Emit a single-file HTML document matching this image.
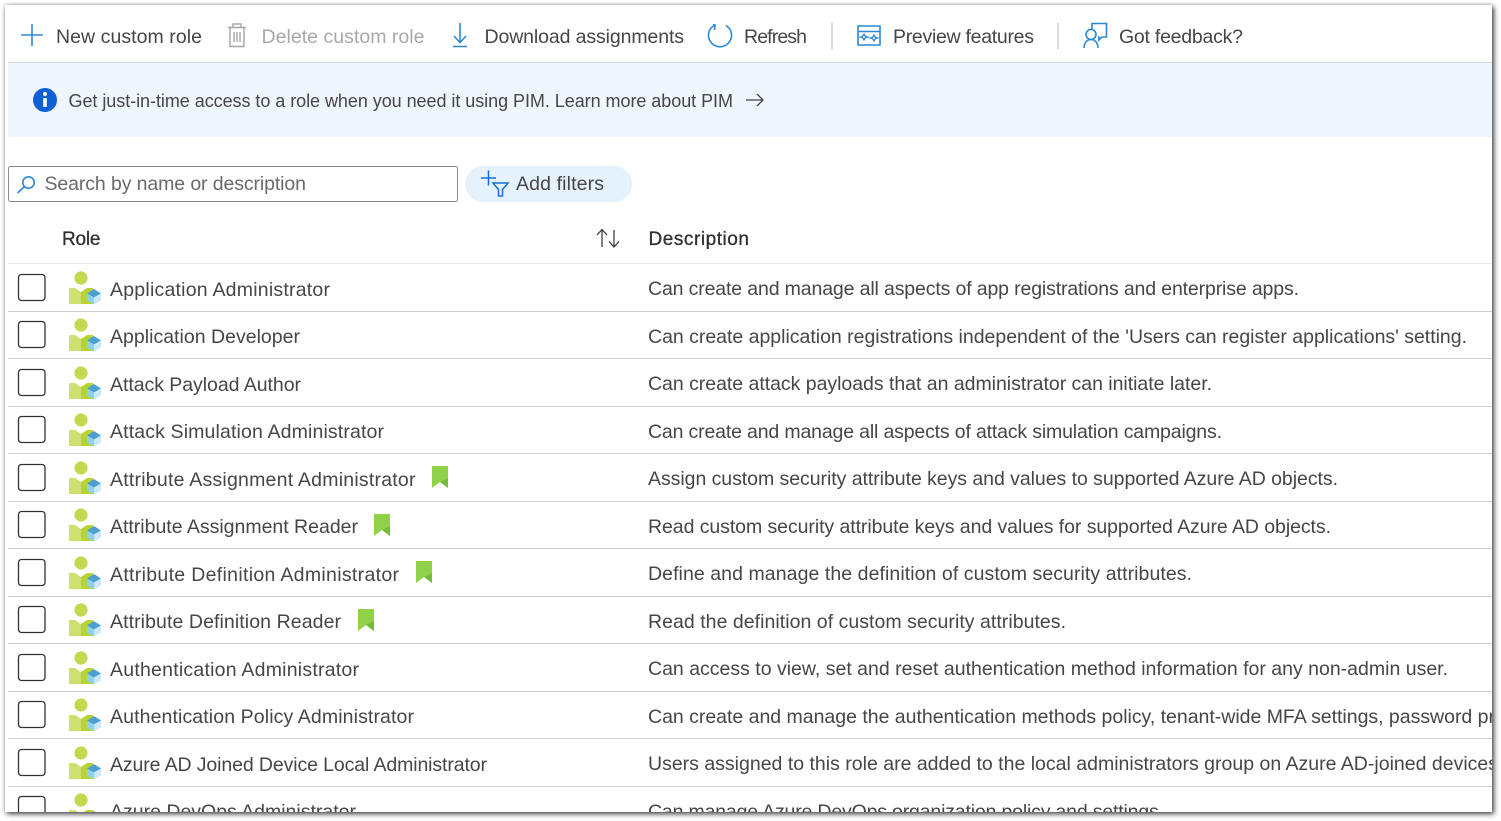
<!DOCTYPE html>
<html lang="en"><head><meta charset="utf-8"><title>Roles</title>
<style>
html,body{margin:0;padding:0;width:1501px;height:821px;background:#fff;overflow:hidden}
#p{position:absolute;left:5px;top:5px;width:1487px;height:807px;background:#fff;box-shadow:2px 2px 5px rgba(0,0,0,.7),0 0 4px rgba(0,0,0,.25)}
svg{position:absolute;left:0;top:0}
text{font-family:"Liberation Sans",sans-serif;font-size:19.5px;fill:#464646}
.d{fill:#a8a8a8}
.g{fill:#6a6a6a}
.h{fill:#2f2f2f;stroke:#2f2f2f;stroke-width:.3px}
.ic{fill:none;stroke:#2b88d8;stroke-width:1.6}
.l{stroke:#cfcfcf;stroke-width:1}
</style></head><body>
<div id="p"></div>
<svg width="1501" height="821" viewBox="0 0 1501 821" xmlns="http://www.w3.org/2000/svg">
<defs>
<clipPath id="c"><rect x="5" y="5" width="1487" height="807"/></clipPath>
<g id="u">
<circle cx="81" cy="278" r="6.6" fill="#c3d94f"/>
<path d="M69 288h6l6 4v12H69z" fill="#cfe070"/>
<path d="M81 292l6-4h6v16H81z" fill="#b9d334"/>
<path d="M87 293.500l7-4.500 7 4.500-7 4z" fill="#4a9fd0"/>
<path d="M87 293.500l7 4v7l-7-4z" fill="#8fd0ec"/>
<path d="M101 293.500l-7 4v7l7-4z" fill="#cbe8f5"/>
</g>
<g id="b">
<path d="M0 0h16v22l-8-6-8 6z" fill="#8fd24a"/>
<path d="M16 12v10l-8-6z" fill="#76ba3e"/>
</g>
</defs>
<g clip-path="url(#c)">
<!-- toolbar -->
<path d="M21 35h22M32 24v22" class="ic"/>
<text x="56" y="43" textLength="146">New custom role</text>
<path d="M228 27.500h18M233 27v-3h8v3M230 28v18.500h14V28M234 32v10M237 32v10M240 32v10" fill="none" stroke="#a6a6a6" stroke-width="1.400"/>
<text x="261.500" y="43" textLength="163" class="d">Delete custom role</text>
<path d="M460 23v19M454 36l6 6.500 6-6.500M453 46.500h14" class="ic"/>
<text x="484.500" y="43" textLength="199.500">Download assignments</text>
<path d="M714 25.500a11.500 11.500 0 1 0 12 0M713 24.500l2 .5-.5 5" class="ic"/>
<text x="744" y="43" textLength="63">Refresh</text>
<path d="M832 23v26M1058 23v26" stroke="#cfcfcf" stroke-width="1.500"/>
<path d="M858 26h22v19h-22zM858 31.500h22" class="ic"/>
<path d="M864 33.500c.6 2.400 1 2.800 3.500 3.500-2.500.7-2.900 1.100-3.500 3.500-.6-2.400-1-2.800-3.500-3.500 2.500-.7 2.900-1.100 3.500-3.500zM874 34.500c.6 2.400 1 2.800 3.500 3.500-2.500.7-2.900 1.100-3.500 3.500-.6-2.400-1-2.800-3.500-3.500 2.500-.7 2.900-1.100 3.500-3.500z" fill="none" stroke="#2b88d8" stroke-width="1.300"/>
<text x="893" y="43" textLength="141">Preview features</text>
<path d="M1092 29v-5.500h14.500V37h-4.500l-3 3v-3h-1" class="ic"/>
<circle cx="1091" cy="34.500" r="5" class="ic"/>
<path d="M1084 48c0-5 3-8.500 7-8.500s7 3.500 7 8.500" class="ic"/>
<text x="1119" y="43" textLength="124">Got feedback?</text>
<path d="M8 62.500h1484" stroke="#d2d6dc" stroke-width="1"/>
<!-- banner -->
<rect x="8" y="63" width="1484" height="74" fill="#eff6fd"/>
<circle cx="45" cy="100" r="12" fill="#0f5fd7"/>
<rect x="43.200" y="98" width="3.600" height="9" fill="#fff"/>
<circle cx="45" cy="94" r="2.100" fill="#fff"/>
<text x="68.500" y="107" textLength="664.500" style="font-size:18px">Get just-in-time access to a role when you need it using PIM. Learn more about PIM</text>
<path d="M746 100h17M757 94l6 6-6 6" fill="none" stroke="#444" stroke-width="1.300"/>
<!-- search -->
<rect x="8.500" y="166.500" width="449" height="35" rx="2" fill="#fff" stroke="#8a8886"/>
<circle cx="28.500" cy="182.500" r="5.700" class="ic"/>
<path d="M24 187l-6.500 6" class="ic"/>
<text x="44.500" y="190" textLength="261.500" class="g">Search by name or description</text>
<rect x="465" y="166" width="167" height="36" rx="18" fill="#e5f1fb"/>
<path d="M481 178h15M488.500 170.500v15" fill="none" stroke="#1470dc" stroke-width="1.500"/>
<path d="M493 183h15l-5.500 6.500v6.500h-4v-6.500z" fill="none" stroke="#1470dc" stroke-width="1.500"/>
<text x="516" y="190" textLength="88">Add filters</text>
<!-- header -->
<text x="62" y="245" textLength="38.500" class="h" style="font-size:19px">Role</text>
<path d="M602 247v-17M597 235l5-5.500 5 5.500M614 230v17M609 241.500l5 5.500 5-5.500" fill="none" stroke="#333" stroke-width="1.200"/>
<text x="648.500" y="245" textLength="100.500" class="h" style="font-size:19px">Description</text>
<path d="M8 263.500h1484" stroke="#e8e8e8"/>
<!-- rows -->
<rect x="18.500" y="274.500" width="26.500" height="26" rx="3" fill="#fff" stroke="#333" stroke-width="1.300"/>
<use href="#u"/>
<text x="110" y="296" textLength="220">Application Administrator</text>
<text x="648" y="295" textLength="651">Can create and manage all aspects of app registrations and enterprise apps.</text>
<path d="M8 311.500h1484" class="l"/>

<rect x="18.500" y="321.500" width="26.500" height="26" rx="3" fill="#fff" stroke="#333" stroke-width="1.300"/>
<use href="#u" y="47"/>
<text x="110" y="343" textLength="190">Application Developer</text>
<text x="648" y="343" textLength="819">Can create application registrations independent of the 'Users can register applications' setting.</text>
<path d="M8 358.500h1484" class="l"/>

<rect x="18.500" y="369.500" width="26.500" height="26" rx="3" fill="#fff" stroke="#333" stroke-width="1.300"/>
<use href="#u" y="95"/>
<text x="110" y="391" textLength="191">Attack Payload Author</text>
<text x="648" y="390" textLength="564">Can create attack payloads that an administrator can initiate later.</text>
<path d="M8 406.500h1484" class="l"/>

<rect x="18.500" y="416.500" width="26.500" height="26" rx="3" fill="#fff" stroke="#333" stroke-width="1.300"/>
<use href="#u" y="142"/>
<text x="110" y="438" textLength="274">Attack Simulation Administrator</text>
<text x="648" y="438" textLength="574">Can create and manage all aspects of attack simulation campaigns.</text>
<path d="M8 453.500h1484" class="l"/>

<rect x="18.500" y="464.500" width="26.500" height="26" rx="3" fill="#fff" stroke="#333" stroke-width="1.300"/>
<use href="#u" y="190"/>
<text x="110" y="486" textLength="305.500">Attribute Assignment Administrator</text>
<use href="#b" x="432" y="466"/>
<text x="648" y="485" textLength="690">Assign custom security attribute keys and values to supported Azure AD objects.</text>
<path d="M8 501.500h1484" class="l"/>

<rect x="18.500" y="511.500" width="26.500" height="26" rx="3" fill="#fff" stroke="#333" stroke-width="1.300"/>
<use href="#u" y="237"/>
<text x="110" y="533" textLength="248">Attribute Assignment Reader</text>
<use href="#b" x="374" y="514"/>
<text x="648" y="533" textLength="683">Read custom security attribute keys and values for supported Azure AD objects.</text>
<path d="M8 548.500h1484" class="l"/>

<rect x="18.500" y="559.500" width="26.500" height="26" rx="3" fill="#fff" stroke="#333" stroke-width="1.300"/>
<use href="#u" y="285"/>
<text x="110" y="581" textLength="289">Attribute Definition Administrator</text>
<use href="#b" x="416" y="561"/>
<text x="648" y="580" textLength="544">Define and manage the definition of custom security attributes.</text>
<path d="M8 596.500h1484" class="l"/>

<rect x="18.500" y="606.500" width="26.500" height="26" rx="3" fill="#fff" stroke="#333" stroke-width="1.300"/>
<use href="#u" y="332"/>
<text x="110" y="628" textLength="231">Attribute Definition Reader</text>
<use href="#b" x="358" y="609"/>
<text x="648" y="628" textLength="418">Read the definition of custom security attributes.</text>
<path d="M8 643.500h1484" class="l"/>

<rect x="18.500" y="654.500" width="26.500" height="26" rx="3" fill="#fff" stroke="#333" stroke-width="1.300"/>
<use href="#u" y="380"/>
<text x="110" y="676" textLength="249">Authentication Administrator</text>
<text x="648" y="675" textLength="800">Can access to view, set and reset authentication method information for any non-admin user.</text>
<path d="M8 691.500h1484" class="l"/>

<rect x="18.500" y="701.500" width="26.500" height="26" rx="3" fill="#fff" stroke="#333" stroke-width="1.300"/>
<use href="#u" y="427"/>
<text x="110" y="723" textLength="304">Authentication Policy Administrator</text>
<text x="648" y="723" textLength="847">Can create and manage the authentication methods policy, tenant-wide MFA settings, password pr</text>
<path d="M8 738.500h1484" class="l"/>

<rect x="18.500" y="749.500" width="26.500" height="26" rx="3" fill="#fff" stroke="#333" stroke-width="1.300"/>
<use href="#u" y="475"/>
<text x="110" y="771" textLength="377">Azure AD Joined Device Local Administrator</text>
<text x="648" y="770" textLength="850">Users assigned to this role are added to the local administrators group on Azure AD-joined devices</text>
<path d="M8 786.500h1484" class="l"/>

<rect x="18.500" y="796.500" width="26.500" height="26" rx="3" fill="#fff" stroke="#333" stroke-width="1.300"/>
<use href="#u" y="522"/>
<text x="110" y="818" textLength="246">Azure DevOps Administrator</text>
<text x="648" y="818" textLength="516">Can manage Azure DevOps organization policy and settings.</text>
</g>
</svg>
</body></html>
